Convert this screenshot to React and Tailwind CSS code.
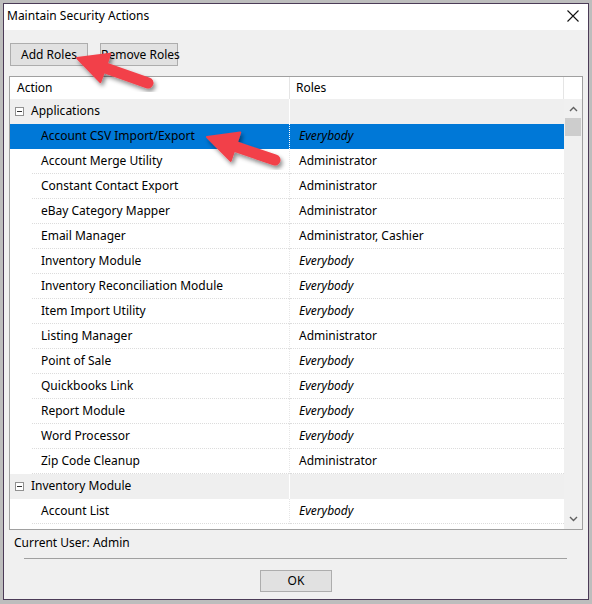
import React from "react";

const rows = [
  { group: "Applications" },
  { name: "Account CSV Import/Export", roles: "Everybody", all: true, selected: true },
  { name: "Account Merge Utility", roles: "Administrator" },
  { name: "Constant Contact Export", roles: "Administrator" },
  { name: "eBay Category Mapper", roles: "Administrator" },
  { name: "Email Manager", roles: "Administrator, Cashier" },
  { name: "Inventory Module", roles: "Everybody", all: true },
  { name: "Inventory Reconciliation Module", roles: "Everybody", all: true },
  { name: "Item Import Utility", roles: "Everybody", all: true },
  { name: "Listing Manager", roles: "Administrator" },
  { name: "Point of Sale", roles: "Everybody", all: true },
  { name: "Quickbooks Link", roles: "Everybody", all: true },
  { name: "Report Module", roles: "Everybody", all: true },
  { name: "Word Processor", roles: "Everybody", all: true },
  { name: "Zip Code Cleanup", roles: "Administrator" },
  { group: "Inventory Module" },
  { name: "Account List", roles: "Everybody", all: true },
];

const font = { fontFamily: '"Noto Sans", "Liberation Sans", sans-serif' };

const MinusBox = () => (
  <span className="flex h-[9px] w-[9px] items-center justify-center border border-[#919191] bg-white">
    <span className="h-px w-[5px] bg-[#333]" />
  </span>
);

const Chevron = ({ down }) => (
  <svg width="9" height="6" viewBox="0 0 9 6">
    <path
      d={down ? "M1 1 L4.5 4.5 L8 1" : "M1 5 L4.5 1.5 L8 5"}
      fill="none"
      stroke="#606060"
      strokeWidth="1.4"
    />
  </svg>
);

const Row = ({ row }) => {
  if (row.group) {
    return (
      <div className="flex h-[25px] bg-[#efefef]">
        <div className="flex w-[280px] items-center gap-[7px] border-r border-white pb-[1px] pl-[5px]">
          <MinusBox />
          <span>{row.group}</span>
        </div>
        <div className="flex-1" />
      </div>
    );
  }
  const sel = row.selected;
  return (
    <div className={`flex h-[25px] ${sel ? "bg-[#0078d7]" : "bg-white"}`}>
      <div
        className={`w-[280px] border-r border-dotted pl-[22px] ${
          sel ? "border-white" : "border-[#e6e6e6]"
        }`}
      >
        <div
          className={`flex h-full items-center pb-[1px] pl-[9px] ${
            sel ? "" : "border-b border-dotted border-[#dcdcdc]"
          }`}
        >
          {row.name}
        </div>
      </div>
      <div
        className={`flex flex-1 items-center pb-[1px] pl-[9px] ${row.all ? "italic" : ""} ${
          sel ? "" : "border-b border-dotted border-[#dcdcdc]"
        }`}
      >
        {row.roles}
      </div>
    </div>
  );
};

const Arrow = ({ tip, tail }) => {
  const dx = tail[0] - tip[0];
  const dy = tail[1] - tip[1];
  const len = Math.hypot(dx, dy);
  const ux = dx / len;
  const uy = dy / len;
  const head = 30;
  const half = 15;
  const bx = tip[0] + ux * head;
  const by = tip[1] + uy * head;
  const px = -uy;
  const py = ux;
  const pts = `${tip[0]},${tip[1]} ${bx + px * half},${by + py * half} ${bx - px * half},${by - py * half}`;
  return (
    <g filter="url(#arrowShadow)">
      <line
        x1={tip[0] + ux * 20}
        y1={tip[1] + uy * 20}
        x2={tail[0]}
        y2={tail[1]}
        stroke="#f2404a"
        strokeWidth="11"
        strokeLinecap="round"
      />
      <polygon points={pts} fill="#f2404a" strokeLinejoin="round" stroke="#f2404a" strokeWidth="2" />
    </g>
  );
};

export default function App() {
  return (
    <div
      className="relative h-[604px] w-[592px] bg-[#bdbdbd] p-[3px] text-[12px] leading-[16px] text-black"
      style={font}
    >
      <div className="flex h-[597px] w-[586px] flex-col border border-[#4b3b57] bg-[#f0f0f0]">
        {/* title bar */}
        <div className="flex h-[26px] items-center justify-between bg-white pl-[3px] pr-[9px]">
          <span className="mt-[-2px]">Maintain Security Actions</span>
          <svg width="12" height="12" viewBox="0 0 12 12" className="mt-[-2px]">
            <path d="M0.5 0.5 L11.5 11.5 M11.5 0.5 L0.5 11.5" stroke="#111" strokeWidth="1.1" />
          </svg>
        </div>

        <div className="flex flex-1 flex-col px-[5px] pt-[13px]">
          <div className="flex gap-[12px] pl-[1px]">
            <button className="h-[23px] w-[78px] whitespace-nowrap border border-[#adadad] bg-[#e1e1e1]">
              Add Roles
            </button>
            <button className="h-[23px] w-[78px] whitespace-nowrap border border-[#adadad] bg-[#e1e1e1]">
              Remove Roles
            </button>
          </div>

          {/* action / roles list */}
          <div className="mt-[10px] flex h-[454px] w-[574px] flex-col border border-[#a0a0a0] bg-white">
            <div className="flex h-[22px] items-center">
              <div className="flex h-full w-[280px] items-center border-r border-[#e5e5e5] pl-[7px]">Action</div>
              <div className="flex h-full w-[274px] items-center border-r border-[#e5e5e5] pl-[6px]">Roles</div>
            </div>
            <div className="flex flex-1">
              <div className="w-[554px]">
                {rows.map((r, i) => (
                  <Row key={i} row={r} />
                ))}
              </div>
              <div className="flex w-[18px] flex-col items-center bg-[#f0f0f0] py-[7px]">
                <Chevron />
                <div className="mt-[6px] h-[18px] w-[16px] bg-[#cdcdcd]" />
                <div className="flex-1" />
                <Chevron down />
              </div>
            </div>
          </div>

          <div className="mt-[5px] pl-[5px]">Current User: Admin</div>
          <div className="ml-[15px] mt-[7px] h-px w-[543px] bg-[#a0a0a0]" />
          <div className="mt-[11px] flex justify-center">
            <button className="h-[22px] w-[72px] border border-[#adadad] bg-[#e1e1e1]">OK</button>
          </div>
        </div>
      </div>

      <svg className="pointer-events-none absolute inset-0" width="592" height="604">
        <defs>
          <filter id="arrowShadow" x="-30%" y="-30%" width="160%" height="160%">
            <feDropShadow dx="2" dy="3" stdDeviation="2" floodColor="#000" floodOpacity="0.45" />
          </filter>
        </defs>
        <Arrow tip={[77, 58]} tail={[148, 83]} />
        <Arrow tip={[207, 137]} tail={[275, 160]} />
      </svg>
    </div>
  );
}
